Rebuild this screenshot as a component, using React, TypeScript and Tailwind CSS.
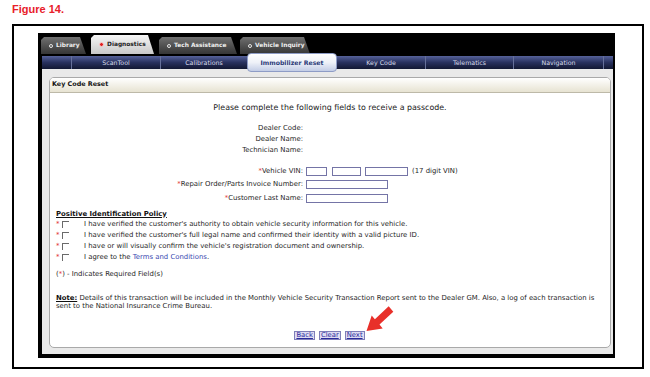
import React from "react";

function Tab({ label, active, w }: { label: string; active?: boolean; w: string }) {
  return (
    <div
      className={`${w} ${active ? "h-[19px] bg-gradient-to-b from-[#f6f6f6] to-[#c9c9c9] text-[#1e1e1e]" : "h-[17px] bg-gradient-to-b from-[#707070] to-[#363636] text-[#eeeeee]"} flex items-center [clip-path:polygon(0_3px,3px_0,calc(100%_-_6px)_0,100%_100%,0_100%)] pl-[8px] text-[5.9px] font-bold leading-none`}
    >
      {active ? (
        <span className="w-[5px] h-[5px] rounded-full bg-[#e02020] border border-[#f8d0d0] mr-[3px] shrink-0" />
      ) : (
        <span className="w-[4px] h-[4px] rounded-full border border-[#e6e6e6] mr-[3px] shrink-0" />
      )}
      <span className="whitespace-nowrap">{label}</span>
    </div>
  );
}

function NavCell({ label, w, sep }: { label?: string; w: string; sep?: boolean }) {
  return (
    <div
      className={`${w} h-full flex items-center justify-center text-[6.3px] text-[#d8dcea] whitespace-nowrap ${sep ? "border-l border-[#66709a]" : ""}`}
    >
      {label}
    </div>
  );
}

function Check({ children }: { children: React.ReactNode }) {
  return (
    <div className="h-[11px] flex items-center">
      <span className="text-[#e03030] w-[5px] text-[7px] leading-none">*</span>
      <span className="w-[7px] h-[7px] ml-[1px] border-t border-l border-t-[#6a6a6a] border-l-[#6a6a6a] bg-white shrink-0" />
      <span className="ml-[15px] whitespace-nowrap">{children}</span>
    </div>
  );
}

export default function App() {
  return (
    <div className="w-[650px] h-[377px] bg-white relative overflow-hidden font-['DejaVu_Sans',sans-serif] text-[#262626]">
      <div className="pl-[12px] pt-[4px] h-[24px] text-[11px] font-bold text-[#e8202a] font-['Liberation_Sans',Arial,sans-serif] leading-[11px]">
        Figure 14.
      </div>
      <div className="ml-[12px] w-[632px] h-[345px] border-2 border-black pt-[7px] pl-[24px]">
        <div className="w-[577px] h-[325px] bg-black flex flex-col pl-[4px] pr-[2px] pb-[4px]">
          {/* tabs */}
          <div className="h-[23px] flex items-end pb-[2px] shrink-0">
            <div className="ml-[-1px]"><Tab label="Library" w="w-[45px]" /></div>
            <div className="ml-[5px]"><Tab label="Diagnostics" w="w-[63px]" active /></div>
            <div className="ml-[5px]"><Tab label="Tech Assistance" w="w-[78px]" /></div>
            <div className="ml-[3px]"><Tab label="Vehicle Inquiry" w="w-[70px]" /></div>
          </div>
          {/* nav */}
          <div className="h-[13px] flex shrink-0 bg-gradient-to-b from-[#56629a] via-[#28315e] to-[#121833] relative z-10">
            <NavCell w="w-[29px]" />
            <NavCell label="ScanTool" w="w-[89px]" sep />
            <NavCell label="Calibrations" w="w-[87px]" sep />
            <div className="w-[90px] h-[19px] -mt-[3px] rounded-[4px] border border-[#8e9cc6] bg-gradient-to-b from-white via-[#eef1f8] to-[#c3cde6] flex items-center justify-center text-[6.2px] font-bold text-[#2b3a78] whitespace-nowrap">
              Immobilizer Reset
            </div>
            <NavCell label="Key Code" w="w-[88px]" />
            <NavCell label="Telematics" w="w-[88px]" sep />
            <NavCell label="Navigation" w="w-[90px]" sep />
            <NavCell w="w-[10px]" sep />
          </div>
          {/* content */}
          <div className="flex-1 bg-[#e9e9e9] pl-[7px] pt-[8px] pr-[2px] pb-[6px] flex">
            <div className="flex-1 bg-white border border-[#a9a9a9] rounded-[5px] flex flex-col overflow-hidden">
              <div className="h-[15px] shrink-0 bg-gradient-to-b from-white to-[#e7e3d2] border-b border-[#bdb9a8] flex items-center pl-[2px] text-[6.4px] font-bold text-[#111]">
                Key Code Reset
              </div>
              <div className="flex flex-col text-[6.9px] leading-none">
                <div className="mt-[10px] h-[10px] flex items-center justify-center text-[7.9px] text-[#1a1a1a]">
                  Please complete the following fields to receive a passcode.
                </div>
                <div className="mt-[10px] flex flex-col">
                  <div className="h-[11px] flex items-center"><span className="w-[253px] text-right">Dealer Code:</span></div>
                  <div className="h-[11px] flex items-center"><span className="w-[253px] text-right">Dealer Name:</span></div>
                  <div className="h-[11px] flex items-center"><span className="w-[253px] text-right">Technician Name:</span></div>
                </div>
                <div className="mt-[9px] h-[13px] flex items-center">
                  <span className="w-[253px] text-right"><span className="text-[#e03030]">*</span>Vehicle VIN:</span>
                  <span className="ml-[3px] w-[21px] h-[9px] border border-[#7474a6]" />
                  <span className="ml-[5px] w-[29px] h-[9px] border border-[#7474a6]" />
                  <span className="ml-[4px] w-[43px] h-[9px] border border-[#7474a6]" />
                  <span className="ml-[4px] whitespace-nowrap">(17 digit VIN)</span>
                </div>
                <div className="h-[13px] flex items-center">
                  <span className="w-[253px] text-right whitespace-nowrap"><span className="text-[#e03030]">*</span>Repair Order/Parts Invoice Number:</span>
                  <span className="ml-[3px] w-[82px] h-[9px] border border-[#7474a6]" />
                </div>
                <div className="mt-[1px] h-[13px] flex items-center">
                  <span className="w-[253px] text-right"><span className="text-[#e03030]">*</span>Customer Last Name:</span>
                  <span className="ml-[3px] w-[82px] h-[9px] border border-[#7474a6]" />
                </div>
                <div className="pl-[6px] flex flex-col">
                  <div className="mt-[4.5px] h-[9px] flex items-center font-bold underline text-[#111]">
                    Positive Identification Policy
                  </div>
                  <Check>I have verified the customer's authority to obtain vehicle security information for this vehicle.</Check>
                  <Check>I have verified the customer's full legal name and confirmed their identity with a valid picture ID.</Check>
                  <Check>I have or will visually confirm the vehicle's registration document and ownership.</Check>
                  <Check>
                    I agree to the <span className="text-[#3848b0]">Terms and Conditions</span>.
                  </Check>
                  <div className="mt-[7px] h-[9px] flex items-center">
                    (<span className="text-[#e03030]">*</span>) - Indicates Required Field(s)
                  </div>
                  <div className="mt-[15.5px] leading-[8px]">
                    <span className="font-bold underline text-[#111]">Note:</span> Details of this transaction will be included in the Monthly Vehicle Security Transaction Report sent to the Dealer GM. Also, a log of each transaction is
                    <br />
                    sent to the National Insurance Crime Bureau.
                  </div>
                </div>
                <div className="mt-[21px] flex justify-center gap-[4px] pr-[1px]">
                  <button className="h-[9px] px-[1px] border border-[#7e7eb8] bg-[#dedcf2] text-[#2a2a9c] underline text-[6.8px] leading-[7px]">Back</button>
                  <button className="h-[9px] px-[1px] border border-[#7e7eb8] bg-[#dedcf2] text-[#2a2a9c] underline text-[6.8px] leading-[7px]">Clear</button>
                  <button className="h-[9px] px-[1px] border border-[#7e7eb8] bg-[#dedcf2] text-[#2a2a9c] underline text-[6.8px] leading-[7px]">Next</button>
                </div>
              </div>
            </div>
          </div>
        </div>
      </div>
      <svg className="absolute left-[360px] top-[300px]" width="40" height="36" viewBox="0 0 40 36">
        <polygon
          points="6.5,31 22.7,28.4 19.5,24.6 33.3,11.7 28.7,6.3 14.9,19.2 11.7,15.4"
          fill="#e8302a"
        />
      </svg>
    </div>
  );
}
